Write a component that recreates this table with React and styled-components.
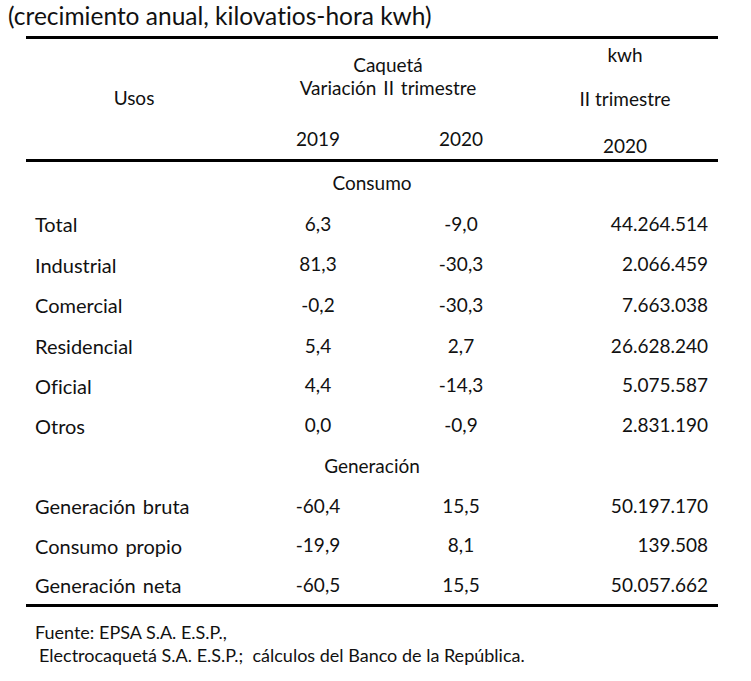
import React from "react";
import styled, { createGlobalStyle } from "styled-components";

const Global = createGlobalStyle`
  html, body { margin: 0; padding: 0; background: #fff; }
  body {
    font-family: Lato, "Open Sans", sans-serif;
    color: #111;
    font-variant-ligatures: none;
    font-feature-settings: "liga" 0, "dlig" 0;
  }
`;

const Page = styled.div`
  width: 751px;
  padding: 2px 0 0 8px;
  box-sizing: border-box;
`;

const Title = styled.div`
  font-size: 24.5px;
  line-height: 28px;
  height: 28px;
`;

const Table = styled.div`
  margin: 6px 0 0 18px;
  width: 692px;
  border-top: 3px solid #000;
  border-bottom: 3px solid #000;
`;

const cols = "244px 96px 190px 162px";

const Head = styled.div`
  display: grid;
  grid-template-columns: ${cols};
  grid-template-rows: 76px 44px;
  border-bottom: 3px solid #000;
  font-size: 19px;
  line-height: 24px;
`;

const UsosCell = styled.div`
  grid-row: 1 / 3;
  grid-column: 1;
  padding: 47px 28px 0 0;
  text-align: center;
`;

const GroupCell = styled.div`
  grid-row: 1;
  grid-column: 2 / 4;
  padding: 14px 50px 0 0;
  text-align: center;
  line-height: 23px;
  word-spacing: 2px;
`;

const YearCell = styled.div`
  grid-row: 2;
  grid-column: ${(p) => p.$col};
  padding-top: 12px;
  text-align: center;
`;

const KwhCell = styled.div`
  grid-row: 1 / 3;
  grid-column: 4;
  display: flex;
  flex-direction: column;
  align-items: center;
  padding: 4px 24px 0 0;
`;

const KLine = styled.div`
  margin-top: ${(p) => p.$gap || 0}px;
`;

const Section = styled.div`
  height: 40px;
  display: flex;
  align-items: center;
  justify-content: center;
  font-size: 19px;
`;

const Row = styled.div`
  display: grid;
  grid-template-columns: ${cols};
  height: ${(p) => p.$h || 40}px;
  align-items: center;
  font-size: 19px;
`;

const Label = styled.div`
  padding-left: 9px;
  font-size: 20px;
  word-spacing: ${(p) => (p.$wide ? "2px" : "0")};
  padding-top: 2px;
`;

const Num = styled.div`
  text-align: center;
`;

const Big = styled.div`
  text-align: right;
  padding-right: 10px;
`;

const Footer = styled.div`
  margin: 14px 0 0 27px;
  font-size: 18px;
  line-height: 23px;
`;

const FootLine = styled.div`
  padding-left: ${(p) => p.$indent || 0}px;
  white-space: pre;
`;

const consumo = [
  ["Total", "6,3", "-9,0", "44.264.514", 42],
  ["Industrial", "81,3", "-30,3", "2.066.459", 39],
  ["Comercial", "-0,2", "-30,3", "7.663.038", 42],
  ["Residencial", "5,4", "2,7", "26.628.240", 40],
  ["Oficial", "4,4", "-14,3", "5.075.587", 39],
  ["Otros", "0,0", "-0,9", "2.831.190", 41],
];

const generacion = [
  ["Generación bruta", "-60,4", "15,5", "50.197.170", 40],
  ["Consumo propio", "-19,9", "8,1", "139.508", 39],
  ["Generación neta", "-60,5", "15,5", "50.057.662", 40],
];

function DataRow({ r }) {
  return (
    <Row $h={r[4]}>
      <Label $wide={r[0].includes(" ")}>{r[0]}</Label>
      <Num>{r[1]}</Num>
      <Num>{r[2]}</Num>
      <Big>{r[3]}</Big>
    </Row>
  );
}

export default function App() {
  return (
    <Page>
      <Global />
      <Title>(crecimiento anual, kilovatios-hora kwh)</Title>
      <Table>
        <Head>
          <UsosCell>Usos</UsosCell>
          <GroupCell>
            <div>Caquetá</div>
            <div>Variación II trimestre</div>
          </GroupCell>
          <YearCell $col={2}>2019</YearCell>
          <YearCell $col={3}>2020</YearCell>
          <KwhCell>
            <KLine>kwh</KLine>
            <KLine $gap={20}>II trimestre</KLine>
            <KLine $gap={23}>2020</KLine>
          </KwhCell>
        </Head>
        <Section>Consumo</Section>
        {consumo.map((r) => (
          <DataRow key={r[0]} r={r} />
        ))}
        <Section>Generación</Section>
        {generacion.map((r) => (
          <DataRow key={r[0]} r={r} />
        ))}
      </Table>
      <Footer>
        <FootLine>Fuente: EPSA S.A. E.S.P.,</FootLine>
        <FootLine $indent={4}>Electrocaquetá S.A. E.S.P.;  cálculos del Banco de la República.</FootLine>
      </Footer>
    </Page>
  );
}
